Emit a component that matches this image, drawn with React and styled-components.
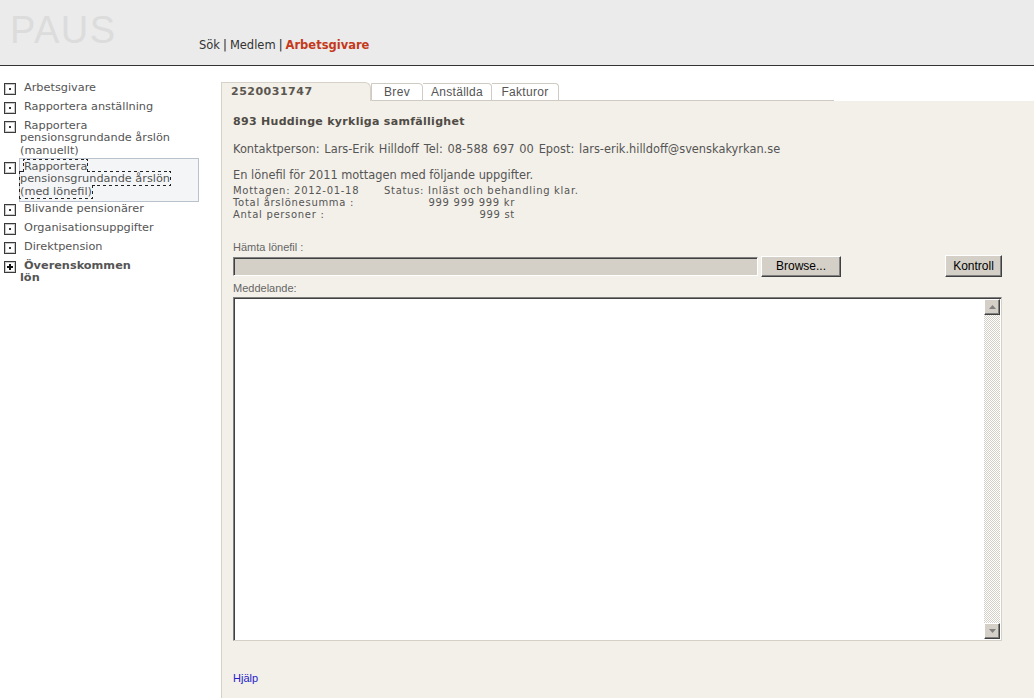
import React from "react";
import styled, { createGlobalStyle } from "styled-components";

const GlobalStyle = createGlobalStyle`
  html, body {
    margin: 0;
    padding: 0;
    background: #ffffff;
    font-family: "DejaVu Sans", Verdana, sans-serif;
  }
`;

const Header = styled.header`
  height: 65px;
  background: #ebebeb;
  border-bottom: 1px solid #333;
  display: flex;
  flex-direction: column;
`;

const Logo = styled.div`
  font-family: "Liberation Sans", Arial, sans-serif;
  font-size: 38px;
  letter-spacing: 1.5px;
  color: #dcdcdc;
  padding: 11px 0 0 10px;
  line-height: 38px;
`;

const Nav = styled.nav`
  padding-left: 199px;
  margin-top: -11px;
  font-size: 11.5px;
  line-height: 14px;
  color: #333;
`;

const NavLink = styled.span`
  color: ${(p) => (p.$active ? "#c4391a" : "#333")};
  font-weight: ${(p) => (p.$active ? "bold" : "normal")};
`;

const Sep = styled.span`
  margin: 0 3px;
  color: #222;
`;

const Layout = styled.div`
  display: flex;
  min-height: calc(100vh - 66px);
`;

const Sidebar = styled.aside`
  width: 221px;
  flex: none;
  padding-top: 12.5px;
  box-sizing: border-box;
`;

const Item = styled.div`
  display: flex;
  align-items: flex-start;
  margin: ${(p) => (p.$selected ? "-3px 0 -2px" : "0")};
`;

const IconBox = styled.svg`
  flex: none;
  width: 12px;
  height: 12px;
  margin: 4px 3px 0 4px;
`;

const ItemText = styled.div`
  width: 159px;
  padding: 3.25px 20px 3.25px 1px;
  font-size: 11.3px;
  line-height: 12.5px;
  color: #555;
  text-indent: 4px;
  box-shadow: ${(p) => (p.$selected ? "inset 0 0 0 1px #b9c2cc" : "none")};
  background: ${(p) => (p.$selected ? "#f4f5f7" : "transparent")};
  font-weight: ${(p) => (p.$bold ? "bold" : "normal")};
`;

const Focus = styled.span`
  outline: 1px dotted #222;
`;

const Main = styled.main`
  flex: 1;
  display: flex;
  flex-direction: column;
  padding-top: 16px;
`;

const TabBar = styled.div`
  display: flex;
  align-items: flex-end;
  height: 19px;
`;

const ActiveTab = styled.div`
  width: 150px;
  height: 19px;
  box-sizing: border-box;
  padding-left: 9px;
  background: #f3f0e9;
  border: 1px solid #d6d2ca;
  border-bottom: none;
  border-top-right-radius: 6px;
  font-size: 11px;
  font-weight: bold;
  letter-spacing: 0.5px;
  color: #5a5650;
  line-height: 18px;
`;

const Tab = styled.div`
  width: ${(p) => p.$w};
  height: 18px;
  box-sizing: border-box;
  text-align: center;
  background: #fff;
  border: 1px solid #cfcbc3;
  border-left: ${(p) => (p.$first ? "1px solid #cfcbc3" : "none")};
  border-top-right-radius: 4px;
  font-family: "Liberation Sans", Arial, sans-serif;
  font-size: 12px;
  letter-spacing: 0.3px;
  line-height: 17px;
  color: #555;
`;

const TabFiller = styled.div`
  width: 275px;
  border-bottom: 1px solid #cfcbc3;
`;

const Panel = styled.section`
  flex: 1;
  background: #f3f0e9;
  border-left: 1px solid #d6d2ca;
  padding: 13px 32px 0 11px;
  color: #555;
`;

const Title = styled.h1`
  margin: 0;
  font-size: 11px;
  line-height: 15px;
  font-weight: bold;
  letter-spacing: 0.3px;
  color: #4f4b45;
`;

const Line = styled.p`
  margin: ${(p) => p.$mt || "0"} 0 0;
  font-size: 11.4px;
  word-spacing: ${(p) => p.$ws || "0"};
  line-height: 14px;
`;

const Facts = styled.div`
  display: grid;
  grid-template-columns: 151px 131px auto;
  margin-top: 3px;
  font-size: 10px;
  letter-spacing: 0.7px;
  line-height: 12px;
`;

const Cell = styled.div`
  text-align: ${(p) => (p.$right ? "right" : "left")};
  grid-column: ${(p) => p.$span || "auto"};
`;

const Label = styled.div`
  font-family: "Liberation Sans", Tahoma, sans-serif;
  font-size: 11px;
  line-height: 13px;
  color: #666;
  margin-top: ${(p) => p.$mt};
`;

const UploadRow = styled.div`
  display: flex;
  align-items: center;
  justify-content: space-between;
  height: 22px;
  margin-top: 1px;
`;

const FileGroup = styled.div`
  display: flex;
  align-items: center;
  gap: 3px;
`;

const FileField = styled.div`
  width: 525px;
  height: 19px;
  box-sizing: border-box;
  background: #d4d0c8;
  border: 1px solid;
  border-color: #808080 #ffffff #ffffff #808080;
  box-shadow: inset 1px 1px 0 #404040, inset -1px -1px 0 #d4d0c8;
`;

const Button = styled.button`
  height: ${(p) => p.$h || "21px"};
  width: ${(p) => p.$w};
  padding: 0;
  box-sizing: border-box;
  background: #d4d0c8;
  border: 1px solid;
  border-color: #ffffff #404040 #404040 #ffffff;
  box-shadow: inset -1px -1px 0 #808080;
  font-family: "Liberation Sans", Tahoma, sans-serif;
  font-size: 12px;
  color: #000;
`;

const MessageBox = styled.div`
  display: flex;
  height: 344px;
  margin-top: 2px;
  box-sizing: border-box;
  background: #fff;
  border: 1px solid;
  border-color: #808080 #d4d0c8 #d4d0c8 #808080;
  box-shadow: inset 1px 1px 0 #404040;
  padding: 1px 0 0 1px;
`;

const TextArea = styled.textarea`
  flex: 1;
  border: none;
  outline: none;
  resize: none;
  background: transparent;
  font-family: "Liberation Mono", monospace;
  font-size: 12px;
`;

const ScrollBar = styled.div`
  width: 16px;
  display: flex;
  flex-direction: column;
  margin: 0 1px 1px 0;
  background: repeating-conic-gradient(#d4d0c8 0 25%, #ffffff 0 50%) 0 0 / 2px 2px;
`;

const Track = styled.div`
  flex: 1;
`;

const ArrowBtn = styled.div`
  width: 16px;
  height: 16px;
  box-sizing: border-box;
  background: #d4d0c8;
  border: 1px solid;
  border-color: #ffffff #404040 #404040 #ffffff;
  box-shadow: inset -1px -1px 0 #808080;
  display: flex;
  align-items: center;
  justify-content: center;
`;

const Help = styled.a`
  display: block;
  margin-top: 31px;
  font-family: "Liberation Sans", Tahoma, sans-serif;
  font-size: 11px;
  line-height: 13px;
  color: #2323c8;
  text-decoration: none;
`;

function BoxIcon({ plus }) {
  return (
    <IconBox viewBox="0 0 12 12">
      <rect x="0.5" y="0.5" width="11" height="11" fill="#fff" stroke="#3a3a3a" />
      <rect x="1.5" y="1.5" width="9" height="9" fill="none" stroke="#c8c8c8" />
      {plus ? (
        <path d="M3 6h6M6 3v6" stroke="#111" strokeWidth="2" />
      ) : (
        <rect x="5" y="5" width="2" height="2" fill="#333" />
      )}
    </IconBox>
  );
}

const menu = [
  { text: "Arbetsgivare" },
  { text: "Rapportera anställning" },
  { text: "Rapportera pensionsgrundande årslön (manuellt)" },
  { text: "Rapportera pensionsgrundande årslön (med lönefil)", selected: true },
  { text: "Blivande pensionärer" },
  { text: "Organisationsuppgifter" },
  { text: "Direktpension" },
  { text: ["Överenskommen", "lön"], bold: true, plus: true },
];

function Arrow({ down }) {
  return (
    <svg width="7" height="4" viewBox="0 0 7 4">
      <path d={down ? "M0 0h7L3.5 4z" : "M0 4h7L3.5 0z"} fill="#808080" />
    </svg>
  );
}

export default function App() {
  return (
    <>
      <GlobalStyle />
      <Header>
        <Logo>PAUS</Logo>
        <Nav>
          <NavLink>Sök</NavLink>
          <Sep>|</Sep>
          <NavLink>Medlem</NavLink>
          <Sep>|</Sep>
          <NavLink $active>Arbetsgivare</NavLink>
        </Nav>
      </Header>
      <Layout>
        <Sidebar>
          {menu.map((m, i) => (
            <Item key={i} $selected={m.selected}>
              <BoxIcon plus={m.plus} />
              <ItemText $selected={m.selected} $bold={m.bold}>
                {Array.isArray(m.text) ? (
                  <>
                    {m.text[0]}
                    <br />
                    {m.text[1]}
                  </>
                ) : m.selected ? (
                  <Focus>{m.text}</Focus>
                ) : (
                  m.text
                )}
              </ItemText>
            </Item>
          ))}
        </Sidebar>
        <Main>
          <TabBar>
            <ActiveTab>2520031747</ActiveTab>
            <Tab $first $w="52px">Brev</Tab>
            <Tab $w="69px">Anställda</Tab>
            <Tab $w="67px">Fakturor</Tab>
            <TabFiller />
          </TabBar>
          <Panel>
            <Title>893 Huddinge kyrkliga samfällighet</Title>
            <Line $mt="13px" $ws="1.2px">
              Kontaktperson: Lars-Erik Hilldoff Tel: 08-588 697 00 Epost:
              lars-erik.hilldoff@svenskakyrkan.se
            </Line>
            <Line $mt="12px">En lönefil för 2011 mottagen med följande uppgifter.</Line>
            <Facts>
              <Cell>Mottagen: 2012-01-18</Cell>
              <Cell $span="span 2">Status: Inläst och behandling klar.</Cell>
              <Cell>Total årslönesumma :</Cell>
              <Cell $right>999 999 999 kr</Cell>
              <Cell />
              <Cell>Antal personer :</Cell>
              <Cell $right>999 st</Cell>
              <Cell />
            </Facts>
            <Label $mt="20px">Hämta lönefil :</Label>
            <UploadRow>
              <FileGroup>
                <FileField />
                <Button $w="80px">Browse...</Button>
              </FileGroup>
              <Button $w="57px" $h="22px">Kontroll</Button>
            </UploadRow>
            <Label $mt="5px">Meddelande:</Label>
            <MessageBox>
              <TextArea />
              <ScrollBar>
                <ArrowBtn>
                  <Arrow />
                </ArrowBtn>
                <Track />
                <ArrowBtn>
                  <Arrow down />
                </ArrowBtn>
              </ScrollBar>
            </MessageBox>
            <Help href="#">Hjälp</Help>
          </Panel>
        </Main>
      </Layout>
    </>
  );
}
